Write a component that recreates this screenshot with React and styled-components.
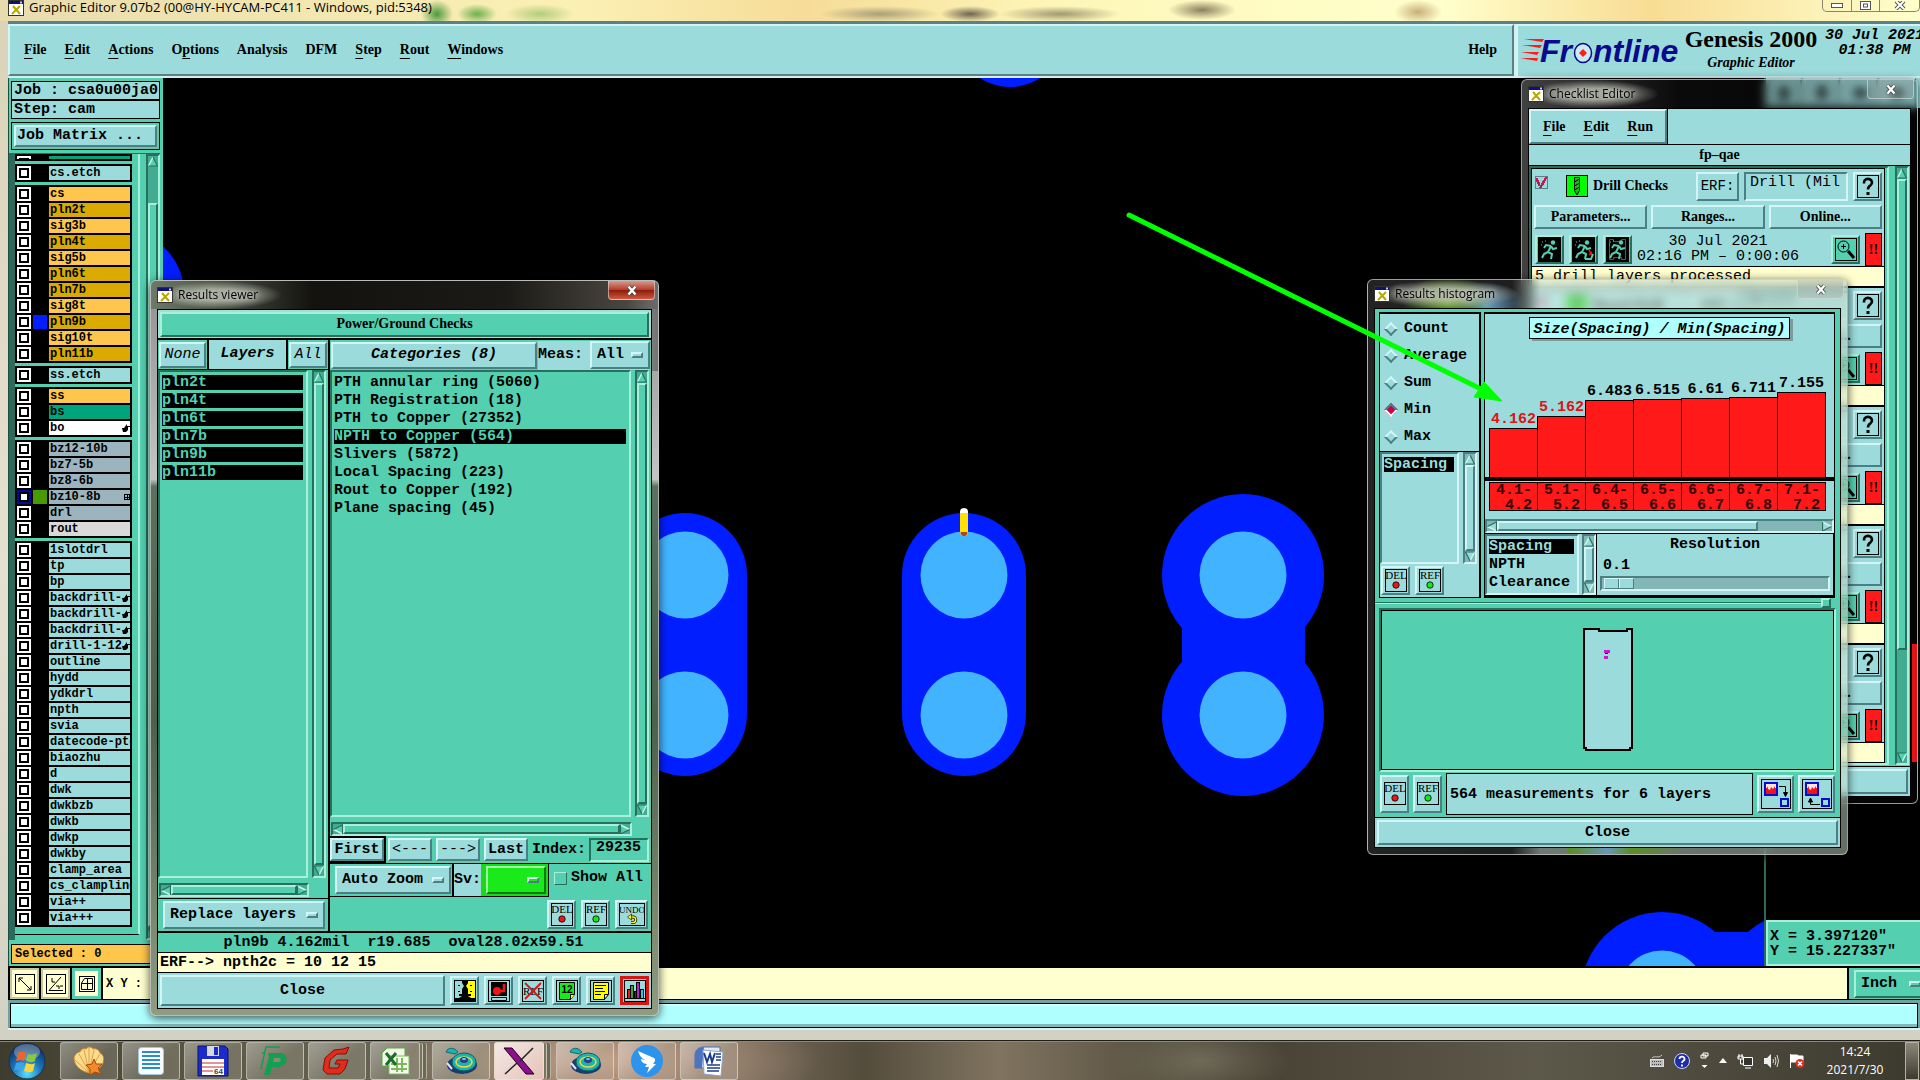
import React from 'react';
import styled, { createGlobalStyle, css } from 'styled-components';

const TEAL = '#9cdbdb';
const GREEN = '#54cfb0';
const CREAM = '#ffffcf';

const mono = '"Liberation Mono", monospace';
const serif = '"Liberation Serif", serif';
const sans = '"Open Sans", sans-serif';

const GlobalStyle = createGlobalStyle`
  *, *::before, *::after {
    box-sizing: border-box;
  }

  body {
    margin: 0;
    background: #000;
    overflow: hidden;
  }

  button, input, select {
    margin: 0;
    padding: 0;
    border: 0;
    border-radius: 0;
    font: inherit;
    color: inherit;
    background: none;
  }

  ul {
    margin: 0;
    padding: 0;
    list-style: none;
  }

  svg {
    display: block;
    flex: none;
  }
`;

const tealRaised = css`
  background: ${TEAL};
  border: 2px solid;
  border-color: #d3f5f5 #4c7f83 #4c7f83 #d3f5f5;
`;

const greenRaised = css`
  background: ${GREEN};
  border: 2px solid;
  border-color: #a9f0dc #26705c #26705c #a9f0dc;
`;

const greenSunken = css`
  background: ${GREEN};
  border: 2px solid;
  border-color: #26705c #a9f0dc #a9f0dc #26705c;
`;

const tealSunken = css`
  background: ${TEAL};
  border: 2px solid;
  border-color: #4c7f83 #d3f5f5 #d3f5f5 #4c7f83;
`;

/* ---------- shared controls ---------- */

const Screen = styled.div`
  position: relative;
  display: flex;
  flex-direction: column;
  height: 100vh;
  overflow: hidden;
  font-family: ${mono};
  font-size: 15px;
  font-weight: 700;
  line-height: 18px;
  color: #000;
  white-space: nowrap;
`;

const Button = styled.button`
  ${tealRaised}
  display: flex;
  align-items: center;
  justify-content: center;
  flex: ${(p) => (p.$grow ? 1 : 'none')};
  width: ${(p) => (p.$width ? `${p.$width}px` : 'auto')};
  height: ${(p) => (p.$height ? `${p.$height}px` : 'auto')};
  font-style: ${(p) => (p.$italic ? 'italic' : 'normal')};
  font-weight: ${(p) => (p.$light ? 400 : 700)};
  overflow: hidden;
`;

const SerifButton = styled(Button)`
  font-family: ${serif};
  font-size: 14px;
`;

const SelectBox = styled.label`
  ${(p) => (p.$tone === 'green' ? greenRaised : tealRaised)}
  display: flex;
  align-items: center;
  flex: none;
  width: ${(p) => p.$width}px;
  height: 28px;
  padding: 0 5px;
  ${(p) => p.$tone === 'lime' && 'background: #1aea1a; border-color: #a6f7a6 #0c7a0c #0c7a0c #a6f7a6;'}

  &::after {
    content: '';
    width: 12px;
    height: 6px;
    ${tealRaised}
    ${(p) => p.$tone === 'lime' && 'background: #1aea1a;'}
    ${(p) => p.$tone === 'green' && `background: ${GREEN};`}
  }

  select {
    appearance: none;
    flex: 1;
    min-width: 0;
    outline: none;
  }
`;

const Select = ({ label, options, width, tone }) => (
  <SelectBox $width={width} $tone={tone}>
    <select aria-label={label}>
      {options.map((o) => (
        <option key={o}>{o}</option>
      ))}
    </select>
  </SelectBox>
);

const BarTrack = styled.div`
  display: flex;
  flex-direction: ${(p) => (p.$across ? 'row' : 'column')};
  align-items: stretch;
  flex: none;
  ${(p) => (p.$across ? 'height: 14px;' : 'width: 14px;')}
  ${(p) => (p.$tone === 'teal' ? tealSunken : greenSunken)}
  background: ${(p) => (p.$tone === 'teal' ? '#83b7b7' : '#43ab91')};
  overflow: hidden;
`;

const BarRail = styled.div`
  flex: 1;
  min-height: 0;
  min-width: 0;
  display: flex;
  flex-direction: ${(p) => (p.$across ? 'row' : 'column')};
`;

const BarThumb = styled.div`
  ${(p) => (p.$tone === 'teal' ? tealRaised : greenRaised)}
  flex: ${(p) => p.$size} 0 0;
`;

const BarSpace = styled.div`
  flex: ${(p) => p.$size} 0 0;
`;

const turn = { up: 0, right: 90, down: 180, left: 270 };

const Arrow = ({ dir, tone }) => (
  <svg width="10" height="11" viewBox="0 0 10 11">
    <g transform={`rotate(${turn[dir]} 5 5.5)`}>
      <path d="M5 1 L9.5 10 H.5Z" fill={tone === 'teal' ? TEAL : GREEN} />
      <path d="M5 1 L.5 10" stroke="#c9f7ec" strokeWidth="1.4" fill="none" />
      <path d="M.5 10 H9.5 L5 1" stroke="#26705c" strokeWidth="1.2" fill="none" />
    </g>
  </svg>
);

const ScrollBar = ({ across, tone, before = 0, thumb = 1, after = 0 }) => (
  <BarTrack $across={across} $tone={tone}>
    <Arrow dir={across ? 'left' : 'up'} tone={tone} />
    <BarRail $across={across}>
      {before > 0 && <BarSpace $size={before} />}
      <BarThumb $size={thumb} $tone={tone} />
      {after > 0 && <BarSpace $size={after} />}
    </BarRail>
    <Arrow dir={across ? 'right' : 'down'} tone={tone} />
  </BarTrack>
);

const List = styled.ul`
  ${(p) => (p.$tone === 'teal' ? tealSunken : greenSunken)}
  flex: 1;
  min-width: 0;
  padding: 3px 3px 3px 2px;
  overflow: hidden;
`;

const ListItem = styled.li`
  height: 15px;
  line-height: 15px;
  margin-bottom: 3px;
  ${(p) => p.$on && `background: #000; color: ${p.$tone === 'teal' ? TEAL : GREEN};`}
`;

/* ---------- icons ---------- */

const WindowIcon = () => (
  <svg width="16" height="16" viewBox="0 0 16 16">
    <rect x=".5" y=".5" width="15" height="15" fill="#fff" stroke="#333" />
    <rect x="1" y="1" width="14" height="3" fill="#10107c" />
    <path d="M12 1.5h2v2h-2z" fill="#ccc" />
    <path d="M5 6 L12 14 M12 6 L4 14" stroke="#b8a800" strokeWidth="2" />
  </svg>
);

const TagIcon = ({ tag, dot }) => (
  <svg width={tag === 'UNDO' ? 26 : 22} height="23" viewBox={tag === 'UNDO' ? '0 0 26 23' : '0 0 22 23'}>
    <rect x=".5" y=".5" width={tag === 'UNDO' ? 25 : 21} height="22" fill={TEAL} stroke="#000" />
    <text
      x={tag === 'UNDO' ? 13 : 11}
      y="10"
      textAnchor="middle"
      fontFamily="Liberation Serif, serif"
      fontWeight="400"
      fontSize={tag === 'UNDO' ? 9 : 11}
    >
      {tag}
    </text>
    {dot && <circle cx="11" cy="16" r="3.2" fill={dot} stroke="#000" strokeWidth=".8" />}
    {tag === 'UNDO' && (
      <g fill="none">
        <path d="M11 14h3a2.500 2.500 0 0 1 0 5.500h-2" stroke="#000" strokeWidth="3" />
        <path d="M11 14h3a2.500 2.500 0 0 1 0 5.500h-2" stroke="#ff0" strokeWidth="1.500" />
        <path d="M8.500 14l4-3v6z" fill="#ff0" stroke="#000" strokeWidth=".6" />
      </g>
    )}
  </svg>
);

const DelButton = ({ height = 29 }) => (
  <Button $width={29} $height={height} aria-label="Delete">
    <TagIcon tag="DEL" dot="#f01414" />
  </Button>
);

const RefButton = ({ height = 29 }) => (
  <Button $width={29} $height={height} aria-label="Reference">
    <TagIcon tag="REF" dot="#1ae61a" />
  </Button>
);

const FacesIcon = () => (
  <svg width="22" height="22" viewBox="0 0 22 22">
    <path d="M0 0h11v22H0z" fill={TEAL} />
    <path d="M11 0h11v22h-11z" fill="#ff0" />
    <path d="M8 0h6v3l-2 3 2 3v5h3v2h-3l3 2h5v4H0v-4h5l3-2H5v-2h3V9l2-3-2-3z" fill="#000" />
    <path d="M4 5.500h2M16 5.500h2M4 11.500h2M16 11.500h2" stroke="#000" />
    <rect x=".5" y=".5" width="21" height="21" fill="none" stroke="#000" />
  </svg>
);

const ShotIcon = () => (
  <svg width="22" height="22" viewBox="0 0 22 22">
    <rect x=".5" y=".5" width="21" height="21" fill={TEAL} stroke="#000" />
    <rect x="3" y="2" width="16" height="14" />
    <circle cx="9" cy="11" r="4" fill="#f01414" />
    <path d="M9 11h7V4" stroke="#f01414" strokeWidth="2.5" fill="none" />
    <path d="M3.5 17.5h15v3h-15z" fill={TEAL} stroke="#000" />
  </svg>
);

const NoRefIcon = () => (
  <svg width="22" height="22" viewBox="0 0 22 22">
    <rect x=".5" y=".5" width="21" height="21" fill={TEAL} stroke="#000" />
    <text x="11" y="15" textAnchor="middle" fontFamily="Liberation Serif, serif" fontWeight="400" fontSize="11">
      REF
    </text>
    <path d="M3 3l16 16M19 3L3 19" stroke="#d01818" strokeWidth="1.8" />
  </svg>
);

const HalfIcon = () => (
  <svg width="22" height="22" viewBox="0 0 22 22">
    <rect x=".5" y=".5" width="21" height="21" fill={TEAL} stroke="#000" />
    <path d="M3.500 2.500h15v12l-4 5h-11z" fill="#1aea1a" stroke="#000" />
    <path d="M14.500 19.500v-5h4" fill="#ff0" stroke="#000" />
    <text x="11" y="13" textAnchor="middle" fontFamily="Liberation Sans, sans-serif" fontWeight="700" fontSize="10">
      12
    </text>
  </svg>
);

const NoteIcon = () => (
  <svg width="22" height="22" viewBox="0 0 22 22">
    <rect x=".5" y=".5" width="21" height="21" fill={TEAL} stroke="#000" />
    <path d="M3.500 2.500h15v12l-4 5h-11z" fill="#ff0" stroke="#000" />
    <path d="M5 5.500h11M5 8.500h8M5 11.500h10M5 14.500h6M14.500 19.500v-5h4" stroke="#000" fill="none" />
  </svg>
);

const ChartIcon = () => (
  <svg width="22" height="22" viewBox="0 0 22 22" shapeRendering="crispEdges">
    <rect x=".5" y=".5" width="21" height="21" fill={TEAL} stroke="#000" />
    <g stroke="#000">
      <path d="M3.500 9.500h3v9h-3z" fill="#f01414" />
      <path d="M6.500 5.500h3v13h-3z" fill="#3aa03a" />
      <path d="M10.500 11.500h2v7h-2z" fill="#1a1ae0" />
      <path d="M12.500 2.500h3v16h-3z" fill="#c81ac8" />
      <path d="M16.500 9.500h3v9h-3z" fill="#1ad0e6" />
      <path d="M1 18.500h20" />
    </g>
  </svg>
);

const ToFromIcon = ({ back }) => (
  <svg width="30" height="30" viewBox="0 0 30 30">
    <rect x=".5" y=".5" width="29" height="29" fill={TEAL} stroke="#000" />
    <rect x="4" y="4" width="12" height="12" fill="#f01414" stroke="#0a0ad0" strokeWidth="2" />
    <path d="M5 5h10v4h-1V7l-2 3-2-2-1 3-2-1V7l-1 2H5z" fill="#ffe3e3" />
    <rect x="20" y="20" width="7" height="7" fill={TEAL} stroke="#0a0ad0" strokeWidth="2" />
    {back ? (
      <g stroke="#000">
        <path d="M18 25.500H8.500V21" fill="none" />
        <path d="M6.500 23h4l-2-4z" fill="#000" />
      </g>
    ) : (
      <g stroke="#000">
        <path d="M18 7.500h6.500V14" fill="none" />
        <path d="M22.500 13.500h4l-2 4z" fill="#000" />
      </g>
    )}
  </svg>
);

const DrillIcon = () => (
  <svg width="22" height="22" viewBox="0 0 22 22">
    <rect x=".5" y=".5" width="21" height="21" fill="#0f0" stroke="#000" />
    <path d="M8.500 2.500h5v13l-2.500 4.500-2.500-4.500z" fill="#0c0" stroke="#000" />
    <path d="M8.500 7l5-3M8.500 11l5-3M8.500 15l5-3" stroke="#000" />
  </svg>
);

const RunIcon = ({ mark }) => (
  <svg width="23" height="25" viewBox="0 0 23 25">
    <rect width="23" height="25" />
    {mark === 'frame' && <path d="M3.500 2.500h4v2h8v-2h4v20h-4v-2h-8v2h-4z" fill="none" stroke="#f01414" />}
    <circle cx="15" cy="5.500" r="2.200" fill={GREEN} />
    <path d="M13 9l-3 6 4 2-1 5M10 15l-4 2-2 4M13 9l-5-1-2 3M13 9l2 3 4-1" stroke={GREEN} strokeWidth="2" fill="none" />
    <path d="M4 5h1M7 4h1M3 8h1" stroke={GREEN} />
    {mark === 'slash' && <path d="M17 13l3 5M20 15l-3 3" stroke="#f01414" strokeWidth="1.500" />}
    {mark === 'slash' && <path d="M13 22h6l2-5" stroke={GREEN} strokeWidth="2" fill="none" />}
  </svg>
);

const LensIcon = () => (
  <svg width="22" height="23" viewBox="0 0 22 23">
    <rect x=".5" y=".5" width="21" height="22" fill={GREEN} stroke="#000" />
    <circle cx="8.500" cy="8.500" r="5.500" fill={GREEN} stroke="#000" />
    <path d="M6 8.500h5M8.500 6v5" stroke="#000" />
    <path d="M13 13l6 7" stroke="#000" strokeWidth="3" />
  </svg>
);

const HelpIcon = () => (
  <svg width="22" height="23" viewBox="0 0 22 23">
    <rect x=".5" y=".5" width="21" height="22" fill={TEAL} stroke="#000" />
    <path d="M7 8.500V7.500a4 3.600 0 1 1 6.500 2.800c-2 1.200-2.500 1.700-2.500 4.200" stroke="#000" strokeWidth="2.600" fill="none" />
    <rect x="9.500" y="17" width="3" height="3" />
  </svg>
);

const HandIcon = () => (
  <svg width="8" height="8" viewBox="0 0 8 8">
    <path d="M0 4h2l3-4v2h3v1H6v3L4 8H1z" />
  </svg>
);

const TableIcon = () => (
  <svg width="6" height="6" viewBox="0 0 6 6" shapeRendering="crispEdges">
    <path d="M.5.5h5v5h-5zM3 .5v5M.5 3h5" fill="none" stroke="#000" />
  </svg>
);

const LogoSvg = styled.svg`
  overflow: visible;
`;

const FrontlineLogo = () => (
  <LogoSvg width="162" height="34" viewBox="0 0 162 34">
    <g fill="#ff1c1c">
      <path d="M4 4h20l-2 3zM2 10h20l-2 3zM1 17h18l-2 3zM0 23h18l-1 3z" />
    </g>
    <g fill="#0a0a8c" fontFamily="Liberation Sans, sans-serif" fontSize="32" fontWeight="700" fontStyle="italic">
      <text x="20" y="27">Fr</text>
      <text x="73" y="27">ntline</text>
    </g>
    <ellipse cx="63" cy="18" rx="8.500" ry="9.500" fill="#c8ecf2" stroke="#0a0a8c" strokeWidth="1.500" />
    <path d="M63 14l4 4-4 4-4-4z" fill="#ff1c1c" />
  </LogoSvg>
);

/* ---------- main editor window ---------- */

const Editor = styled.main`
  flex: 1;
  min-height: 0;
  display: flex;
  flex-direction: column;
  padding: 0 0 10px 8px;
  background: linear-gradient(#d9d3b8, #e6e0d0 55%, #d2d2c4);
`;

const EditorTitle = styled.header`
  display: flex;
  align-items: flex-start;
  justify-content: space-between;
  flex: none;
  height: 21px;
  margin-left: -8px;
  padding-left: 8px;
  background:
    radial-gradient(ellipse 16px 14px at 437px 14px, #4c9a3c, transparent),
    radial-gradient(ellipse 20px 10px at 477px 14px, #6cb04c, transparent),
    radial-gradient(ellipse 34px 10px at 540px 14px, #b4cc7c, transparent),
    radial-gradient(ellipse 60px 8px at 880px 14px, #a8a078, transparent),
    radial-gradient(ellipse 30px 8px at 970px 14px, #6c6450, transparent),
    radial-gradient(ellipse 60px 8px at 1060px 14px, #a09870, transparent),
    radial-gradient(ellipse 34px 10px at 1202px 10px, #8c8060, transparent),
    radial-gradient(ellipse 24px 12px at 1418px 12px, #c8b078, transparent),
    linear-gradient(90deg, #e8dcae, #fbf0b4 30%, #f6dc98 42%, #fdf6b8 55%, #ffffcc 75%, #f8dc94 86%, #ffffcc);
`;

const EditorName = styled.h1`
  display: flex;
  gap: 5px;
  margin: 0;
  font: 400 13px/14px ${sans};
`;

const WindowTools = styled.div`
  display: flex;
  height: 12px;
  border: 1px solid #8a8470;
  border-top: 0;
  border-radius: 0 0 5px 5px;
  overflow: hidden;
`;

const WindowTool = styled.button`
  display: flex;
  align-items: center;
  justify-content: center;
  width: ${(p) => p.$width}px;
  border-left: ${(p) => (p.$first ? 0 : '1px solid #8a8470')};
`;

const TopBar = styled.div`
  display: flex;
  flex: none;
  height: 57px;
  gap: 2px;
  background: #d3f0f0;
  border-top: 3px solid #5c8084;
`;

const MenuBar = styled.nav`
  flex: 1;
  min-width: 0;
  display: flex;
  align-items: center;
  margin-bottom: 2px;
  padding: 0 15px 0 14px;
  gap: 18px;
  background: ${TEAL};
  border: 2px solid;
  border-color: #d3f5f5 #5c8084 #5c8084 #d3f5f5;
  font-family: ${serif};
  font-size: 14px;

  & > :last-child {
    margin-left: auto;
  }
`;

const MenuItem = styled.button`
  line-height: 18px;

  u {
    text-underline-offset: 4px;
    text-decoration-thickness: 1px;
  }
`;

const Menu = ({ text, at }) => (
  <MenuItem>
    {at === undefined ? (
      text
    ) : (
      <>
        {text.slice(0, at)}
        <u>{text[at]}</u>
        {text.slice(at + 1)}
      </>
    )}
  </MenuItem>
);

const Brand = styled.div`
  display: flex;
  flex: none;
  width: 404px;
  background: ${TEAL};
  border: 2px solid #d3f5f5;
  border-right: 0;
  overflow: hidden;
`;

const LogoSlot = styled.div`
  padding: 9px 0 0 2px;
`;

const Product = styled.div`
  flex: none;
  width: 138px;
  text-align: center;
  font-family: ${serif};
  font-size: 24px;
  line-height: 26px;

  em {
    display: block;
    font-size: 14px;
    line-height: 22px;
  }
`;

const Clock = styled.div`
  flex: none;
  padding: 2px 0 0 5px;
  line-height: 15px;
  font-style: italic;
  text-align: center;
`;

const Body = styled.div`
  flex: 1;
  min-height: 0;
  display: flex;
`;

const Side = styled.aside`
  display: flex;
  flex-direction: column;
  flex: none;
  width: 155px;
  padding: 3px 3px 2px 2px;
  background: ${GREEN};
  border-left: 1px solid #1d4c40;
`;

const JobLine = styled.div`
  height: 19px;
  line-height: 18px;
  padding-left: 2px;
  background: ${TEAL};
  border: 1px solid #000;
`;

const MatrixBox = styled.div`
  margin: 3px 0 3px;
  padding: 2px;
  border: 1px solid #000;

  button {
    width: 100%;
    height: 22px;
    justify-content: flex-start;
    padding-left: 1px;
  }
`;

const LayerArea = styled.div`
  flex: 1;
  min-height: 0;
  display: flex;
  margin: 0 0 4px -2px;
  border-top: 1px solid #26705c;
  border-left: 6px solid #2c6a5c;
`;

const LayerList = styled.div`
  flex: 1;
  min-width: 0;
  display: flex;
  flex-direction: column;
  gap: 3px;
  margin: 0 6px 5px 0;
  padding: 0 6px 0 0;
  border-right: 2px solid #a9f0dc;
  border-bottom: 1px solid #000;
  overflow: hidden;
`;

const LayerGroup = styled.div`
  display: grid;
  gap: 2px;
  padding: 2px;
  background: #000;
`;

const LayerRow = styled.label`
  display: grid;
  grid-template-columns: 14px 14px minmax(0, 1fr);
  gap: 2px;
  height: ${(p) => (p.$cut ? 3 : 14)}px;
  align-items: end;
  overflow: hidden;

  input {
    appearance: none;
    width: 14px;
    height: 14px;
    border: 2px solid ${(p) => (p.$active ? '#000a9c' : '#fff')};
    background: #fff;
    box-shadow: inset 0 0 0 2px #000;
  }
`;

const Swatch = styled.span`
  height: 14px;
  background: ${(p) => p.$color || '#000'};
`;

const LayerName = styled.span`
  display: flex;
  align-items: center;
  height: 14px;
  font-size: 12px;
  line-height: 14px;
  padding-left: 1px;
  background: ${(p) => p.$color};

  span {
    flex: 1;
    min-width: 0;
    overflow: hidden;
  }
`;

const Selected = styled.div`
  height: 20px;
  padding-left: 3px;
  font-size: 12px;
  line-height: 18px;
  background: #ffc64d;
  border: 1px solid #000;
`;

const Canvas = styled.div`
  flex: 1;
  min-width: 0;
  background: #000;

  svg {
    width: 100%;
    height: 100%;
  }
`;

const Overview = styled.div`
  display: flex;
  flex-direction: column;
  justify-content: space-between;
  flex: none;
  width: 156px;
  background: #000;
  border-left: 2px solid #2c6a5c;
`;

const OverviewTools = styled.div`
  display: flex;
  gap: 2px;
  height: 30px;
  background: ${TEAL};
`;

const Coords = styled.div`
  height: 46px;
  padding: 7px 2px;
  line-height: 15px;
  font-size: 15px;
  white-space: pre;
  ${greenRaised}
  border-right: 0;
  border-bottom-color: #a9f0dc;
`;

const CommandRow = styled.div`
  display: flex;
  flex: none;
  height: 34px;
  background: #000;
  padding: 2px 0 1px 2px;
  gap: 2px;
`;

const ModeButton = styled.button`
  display: flex;
  align-items: center;
  justify-content: center;
  width: 29px;
  background: ${CREAM};
  border: ${(p) => (p.$on ? `3px solid ${GREEN}` : '2px solid #c8c8a0')};
`;

const CommandField = styled.label`
  flex: 1;
  display: flex;
  align-items: center;
  padding-left: 3px;
  font-size: 12px;
  background: ${CREAM};

  input {
    flex: 1;
    outline: none;
  }
`;

const UnitBox = styled.div`
  width: 71px;
  padding: 2px 0 1px 5px;
  background: ${GREEN};
  overflow: hidden;
`;

const MessageBar = styled.div`
  flex: none;
  height: 30px;
  padding: 3px 2px 1px;
  background: #6fa3a3;
  border-bottom: 2px solid #d3f5f5;

  div {
    height: 25px;
    background: #b0ffff;
    border: 1px solid #000;
    box-shadow: inset 0 -3px 0 #7fb9b9, inset 0 2px 0 #d8ffff;
  }
`;

const layerGroups = [
  [{ name: 'cc', color: '#00a47c', cut: true }],
  [{ name: 'cs.etch', color: TEAL }],
  [
    { name: 'cs', color: '#ffc64d' },
    { name: 'pln2t', color: '#daaa00' },
    { name: 'sig3b', color: '#ffc64d' },
    { name: 'pln4t', color: '#daaa00' },
    { name: 'sig5b', color: '#ffc64d' },
    { name: 'pln6t', color: '#daaa00' },
    { name: 'pln7b', color: '#daaa00' },
    { name: 'sig8t', color: '#ffc64d' },
    { name: 'pln9b', color: '#daaa00', swatch: '#001eff' },
    { name: 'sig10t', color: '#ffc64d' },
    { name: 'pln11b', color: '#daaa00' },
  ],
  [{ name: 'ss.etch', color: TEAL }],
  [
    { name: 'ss', color: '#ffc64d' },
    { name: 'bs', color: '#00a47c' },
    { name: 'bo', color: '#fff', hand: true },
  ],
  [
    { name: 'bz12-10b', color: '#9cb4bd' },
    { name: 'bz7-5b', color: '#9cb4bd' },
    { name: 'bz8-6b', color: '#9cb4bd' },
    { name: 'bz10-8b', color: '#9cb4bd', swatch: '#479a00', active: true, table: true },
    { name: 'drl', color: '#9cb4bd' },
    { name: 'rout', color: '#d9d9d9' },
  ],
  [
    { name: '1slotdrl', color: TEAL },
    { name: 'tp', color: TEAL },
    { name: 'bp', color: TEAL },
    { name: 'backdrill-', color: TEAL, hand: true },
    { name: 'backdrill-', color: TEAL, hand: true },
    { name: 'backdrill-', color: TEAL, hand: true },
    { name: 'drill-1-12', color: TEAL, hand: true },
    { name: 'outline', color: TEAL },
    { name: 'hydd', color: TEAL },
    { name: 'ydkdrl', color: TEAL },
    { name: 'npth', color: TEAL },
    { name: 'svia', color: TEAL },
    { name: 'datecode-pto', color: TEAL },
    { name: 'biaozhu', color: TEAL },
    { name: 'd', color: TEAL },
    { name: 'dwk', color: TEAL },
    { name: 'dwkbzb', color: TEAL },
    { name: 'dwkb', color: TEAL },
    { name: 'dwkp', color: TEAL },
    { name: 'dwkby', color: TEAL },
    { name: 'clamp_area', color: TEAL },
    { name: 'cs_clampline', color: TEAL },
    { name: 'via++', color: TEAL },
    { name: 'via+++', color: TEAL },
  ],
];

const Sidebar = () => (
  <Side>
    <JobLine>Job : csa0u00ja0</JobLine>
    <JobLine>Step: cam</JobLine>
    <MatrixBox>
      <Button>Job Matrix ...</Button>
    </MatrixBox>
    <LayerArea>
      <LayerList>
        {layerGroups.map((group, g) => (
          <LayerGroup key={g}>
            {group.map((l, i) => (
              <LayerRow key={i} $active={l.active} $cut={l.cut}>
                <input type="checkbox" />
                <Swatch $color={l.swatch} />
                <LayerName $color={l.color}>
                  <span>{l.name}</span>
                  {l.hand && <HandIcon />}
                  {l.table && <TableIcon />}
                </LayerName>
              </LayerRow>
            ))}
          </LayerGroup>
        ))}
      </LayerList>
      <ScrollBar before={5} thumb={100} />
    </LayerArea>
    <Selected>Selected : 0</Selected>
  </Side>
);

const COPPER = '#001eff';
const HOLE = '#42b4ff';

// board artwork, drawn in canvas pixels
const Board = () => (
  <Canvas>
    <svg>
      <g fill={COPPER}>
        <circle cx="847" cy="-46" r="55" />
        <circle cx="-41" cy="215" r="62" />
        <rect x="460" y="435" width="124" height="263" rx="62" />
        <rect x="739" y="435" width="124" height="263" rx="62" />
        <circle cx="1080" cy="497" r="81" />
        <circle cx="1080" cy="637" r="81" />
        <rect x="1019" y="540" width="123" height="60" />
        <circle cx="1499" cy="915" r="81" />
        <circle cx="1638" cy="915" r="81" />
        <rect x="1499" y="854" width="140" height="60" />
      </g>
      <g fill={HOLE}>
        <circle cx="522" cy="497" r="43.500" />
        <circle cx="522" cy="637" r="43.500" />
        <circle cx="801" cy="497" r="43.500" />
        <circle cx="801" cy="637" r="43.500" />
        <circle cx="1080" cy="497" r="43.500" />
        <circle cx="1080" cy="637" r="43.500" />
        <circle cx="1499" cy="916" r="43.500" />
      </g>
      <rect x="797" y="430" width="8" height="28" rx="4" fill="#fff" />
      <rect x="797" y="435" width="8" height="19" fill="#ffe000" />
      <path d="M797.500 454h7v2l-2 2h-3l-2-2z" fill="#b44a00" />
    </svg>
  </Canvas>
);

const MainWindow = () => (
  <Editor>
    <EditorTitle>
      <EditorName>
        <WindowIcon />
        Graphic Editor 9.07b2 (00@HY-HYCAM-PC411 - Windows, pid:5348)
      </EditorName>
      <WindowTools>
        <WindowTool $width={28} $first aria-label="Minimize">
          <svg width="12" height="5" viewBox="0 0 12 5">
            <rect x=".5" y=".5" width="11" height="4" fill="#fff" stroke="#555" />
          </svg>
        </WindowTool>
        <WindowTool $width={28} aria-label="Restore">
          <svg width="11" height="9" viewBox="0 0 11 9">
            <rect x=".5" y=".5" width="10" height="8" fill="#fff" stroke="#555" />
            <rect x="3.500" y="3" width="4" height="3" fill="#fff" stroke="#555" />
          </svg>
        </WindowTool>
        <WindowTool $width={40} aria-label="Close window">
          <svg width="12" height="9" viewBox="0 0 12 9">
            <path d="M2 0l8 8M10 0L2 8" stroke="#555" strokeWidth="4" />
            <path d="M2 0l8 8M10 0L2 8" stroke="#fff" strokeWidth="2" />
          </svg>
        </WindowTool>
      </WindowTools>
    </EditorTitle>
    <TopBar>
      <MenuBar>
        <Menu text="File" at={0} />
        <Menu text="Edit" at={0} />
        <Menu text="Actions" at={0} />
        <Menu text="Options" at={1} />
        <Menu text="Analysis" />
        <Menu text="DFM" />
        <Menu text="Step" at={0} />
        <Menu text="Rout" at={0} />
        <Menu text="Windows" at={0} />
        <Menu text="Help" />
      </MenuBar>
      <Brand>
        <LogoSlot>
          <FrontlineLogo />
        </LogoSlot>
        <Product>
          Genesis 2000
          <em>Graphic Editor</em>
        </Product>
        <Clock>
          30 Jul 2021
          <br />
          01:38 PM
        </Clock>
      </Brand>
    </TopBar>
    <Body>
      <Sidebar />
      <Board />
      <Overview>
        <OverviewTools>
          {['up', 'down', 'left', 'right'].map((d) => (
            <Button key={d} $width={36} $height={30} aria-label={`Pan ${d}`}>
              <svg width="16" height="16" viewBox="0 0 16 16">
                <path d="M8 1l6 7h-3v7H5V8H2z" transform={`rotate(${turn[d]} 8 8)`} />
              </svg>
            </Button>
          ))}
        </OverviewTools>
        <Coords>{'X = 3.397120"\nY = 15.227337"'}</Coords>
      </Overview>
    </Body>
    <CommandRow>
      <ModeButton aria-label="Diagonal">
        <svg width="20" height="20" viewBox="0 0 20 20">
          <rect x=".5" y=".5" width="19" height="19" fill="none" stroke="#000" />
          <path d="M4 4l12 12M4 8V4h4M12 16h4v-4" stroke="#000" fill="none" />
        </svg>
      </ModeButton>
      <ModeButton aria-label="Angle">
        <svg width="20" height="20" viewBox="0 0 20 20">
          <rect x=".5" y=".5" width="19" height="19" fill="none" stroke="#000" />
          <path d="M15 3L3 16.500h14M6 4v4h3M10 12h3v3M14 12h3" stroke="#000" fill="none" />
        </svg>
      </ModeButton>
      <ModeButton $on aria-label="Grid">
        <svg width="20" height="20" viewBox="0 0 20 20">
          <rect x="2.500" y="2.500" width="15" height="15" fill="none" stroke="#000" />
          <path d="M4.500 9l3-4.500h8v11h-11zM4.500 9.500h11M10.500 4.500v11" stroke="#000" fill="none" />
        </svg>
      </ModeButton>
      <CommandField>
        X Y :
        <input type="text" />
      </CommandField>
      <UnitBox>
        <Select label="Units" options={['Inch', 'MM']} width={74} tone="green" />
      </UnitBox>
    </CommandRow>
    <MessageBar>
      <div />
    </MessageBar>
  </Editor>
);

/* ---------- floating windows ---------- */

const Frame = styled.section`
  position: absolute;
  display: flex;
  flex-direction: column;
  padding: 0 6px;
  border: 1px solid rgba(200, 200, 200, 0.75);
  border-radius: 6px;
  box-shadow: 0 2px 10px rgba(0, 0, 0, 0.7);
  backdrop-filter: blur(5px);
  padding-bottom: 6px;
`;

const ViewerFrame = styled(Frame)`
  left: 150px;
  top: 280px;
  width: 509px;
  background:
    linear-gradient(90deg, transparent 94%, rgba(110, 110, 110, 0.9)) top / 100% 90px no-repeat,
    linear-gradient(90deg, #6c7a68, #14120e 32%, #1c1a16 70%, #55524c) top / 100% 28px no-repeat,
    linear-gradient(#8f8f8f, #c4c4c4 27%, #5c7060 28%, #4c604c 60%, #8f9c80);
`;

const ChecklistFrame = styled(Frame)`
  right: 2px;
  top: 79px;
  width: 397px;
  background:
    linear-gradient(#e01414, #e01414) right 564px / 5px 118px no-repeat,
    linear-gradient(90deg, rgba(130, 130, 130, 0.5), rgba(20, 20, 20, 0.5) 40%, rgba(20, 20, 20, 0.2));
`;

const HistogramFrame = styled(Frame)`
  right: 72px;
  top: 279px;
  width: 481px;
  background:
    radial-gradient(ellipse 46px 26px at 80px 22px, #6ea82c, transparent),
    radial-gradient(ellipse 40px 24px at 118px 26px, #68a4cc, transparent),
    linear-gradient(90deg, transparent 41%, #5c8c24 42%, #6c94b8 50%, #5c8c24 55%, transparent 66%) bottom / 100% 6px no-repeat,
    linear-gradient(90deg, rgba(50, 50, 50, 0.7), rgba(50, 50, 50, 0.6) 30%, rgba(220, 240, 230, 0.5) 36%, rgba(200, 220, 200, 0.5));
`;

const FrameTitle = styled.header`
  display: flex;
  justify-content: space-between;
  flex: none;
  height: 28px;
  margin-right: -3px;

  h2 {
    display: flex;
    align-items: center;
    gap: 5px;
    margin: 0;
    padding-right: 24px;
    font: 400 12px/26px ${sans};
    color: #000;
    background: radial-gradient(ellipse closest-side, rgba(190, 195, 180, 0.75) 40%, transparent);
    text-shadow: 0 0 5px #ccc, 0 0 8px #ccc;
  }
`;

const FrameClose = styled.button`
  display: flex;
  align-items: center;
  justify-content: center;
  width: 47px;
  height: 19px;
  border: 1px solid rgba(220, 220, 220, 0.6);
  border-top: 0;
  border-radius: 0 0 4px 4px;
  background: ${(p) => (p.$red ? 'linear-gradient(#d89a90, #b83a24 50%, #8c1c0c 52%, #d0583c)' : 'rgba(160, 160, 160, 0.25)')};
`;

const FrameHead = ({ title, red }) => (
  <FrameTitle>
    <h2>
      <WindowIcon />
      {title}
    </h2>
    <FrameClose $red={red} aria-label={`Close ${title}`}>
      <svg width="12" height="11" viewBox="0 0 12 11">
        <path d="M2.500 1.500l7 8M9.500 1.500l-7 8" stroke="#444" strokeWidth="4" />
        <path d="M2.500 1.500l7 8M9.500 1.500l-7 8" stroke="#fff" strokeWidth="2.400" />
      </svg>
    </FrameClose>
  </FrameTitle>
);

/* ---------- results viewer ---------- */

const Panel = styled.div`
  display: flex;
  flex-direction: column;
  background: ${(p) => (p.$tone === 'teal' ? TEAL : GREEN)};
  border: 1px solid #000;
`;

const CheckName = styled.div`
  height: 30px;
  padding: 2px;
  background: #9fe0d8;
  border-bottom: 2px solid #000;

  div {
    ${greenRaised}
    height: 25px;
    line-height: 20px;
    text-align: center;
    font-family: ${serif};
    font-size: 14px;
  }
`;

const ViewerBody = styled.div`
  display: flex;
  height: 591px;
`;

const LayersColumn = styled.div`
  display: flex;
  flex-direction: column;
  flex: none;
  width: 172px;
  border-right: 2px solid #000;
`;

const CategoriesColumn = styled.div`
  display: flex;
  flex-direction: column;
  flex: 1;
  min-width: 0;
`;

const HeadRow = styled.div`
  display: flex;
  align-items: center;
  flex: none;
  height: 30px;
  gap: 1px;
  padding: 0 1px;
  border-bottom: ${(p) => (p.$line ? '1px solid #000' : 0)};
`;

const LayersTitle = styled.div`
  flex: 1;
  height: 29px;
  line-height: 27px;
  text-align: center;
  font-style: italic;
  background: ${TEAL};
  border: solid #000;
  border-width: 0 2px;
`;

const MeasBox = styled.div`
  display: flex;
  align-items: center;
  flex: 1;
  height: 29px;
  justify-content: space-between;
  background: ${TEAL};
`;

const Scrolled = styled.div`
  display: flex;
  flex: 1;
  min-height: 0;
  gap: 4px;
  padding-right: 2px;
`;

const AcrossSlot = styled.div`
  flex: none;
  padding: 5px 19px 0 1px;
`;

const ReplaceRow = styled.div`
  display: flex;
  align-items: center;
  flex: none;
  height: 33px;
  margin-top: 1px;
  padding-left: 5px;
  border-top: 1px solid #000;
`;

const StepRow = styled.div`
  display: flex;
  align-items: center;
  flex: none;
  height: 27px;
  gap: 4px;
  padding-right: 2px;

  label {
    flex: 1;
    display: flex;
    align-items: center;
    justify-content: space-between;
  }

  & > :first-child {
    outline: 2px solid #000;
  }
`;

const IndexInput = styled.input`
  ${greenSunken}
  width: 60px;
  height: 24px;
  padding: 0 0 4px 5px;
`;

const ZoomRow = styled.div`
  display: flex;
  flex: none;
  height: 34px;
  border-top: 1px solid #000;
`;

const ZoomBox = styled.div`
  display: flex;
  align-items: center;
  height: 33px;
  padding: 0 1px 0 5px;
  border: solid #000;
  border-width: 0 2px 1px 0;
`;

const SvBox = styled.div`
  display: flex;
  align-items: center;
  width: 95px;
  height: 33px;
  justify-content: space-between;
  padding-right: 2px;
  background: linear-gradient(90deg, ${TEAL} 27px, #1ad81a 27px);
  border: solid #000;
  border-width: 0 1px 1px 0;
`;

const ShowAll = styled.label`
  display: flex;
  align-items: center;
  gap: 4px;
  height: 28px;
  padding-left: 5px;

  input {
    appearance: none;
    width: 13px;
    height: 13px;
    ${greenRaised}
    border-width: 1px;
  }
`;

const ActionRow = styled.div`
  display: flex;
  align-items: center;
  justify-content: flex-end;
  flex: none;
  height: 34px;
  gap: 5px;
  padding-right: 3px;
`;

const Status = styled.div`
  height: 22px;
  line-height: 20px;
  text-align: center;
  padding-right: 2px;
  white-space: pre;
  border: solid #000;
  border-width: 2px 0 1px;
`;

const ErfLine = styled.div`
  height: 20px;
  line-height: 20px;
  padding-left: 2px;
  background: ${CREAM};
  border: solid #000;
  border-width: 0 0 1px;
`;

const BottomRow = styled.div`
  display: flex;
  align-items: center;
  height: 35px;
  gap: 5px;
  padding: 0 2px;
  background: ${TEAL};
`;

const ChartButton = styled(Button)`
  border: 3px solid #d81414;
`;

const viewerLayers = ['pln2t', 'pln4t', 'pln6t', 'pln7b', 'pln9b', 'pln11b'];

const categories = [
  'PTH annular ring (5060)',
  'PTH Registration (18)',
  'PTH to Copper (27352)',
  'NPTH to Copper (564)',
  'Slivers (5872)',
  'Local Spacing (223)',
  'Rout to Copper (192)',
  'Plane spacing (45)',
];

const ResultsViewer = () => (
  <ViewerFrame>
    <FrameHead title="Results viewer" red />
    <Panel>
      <CheckName>
        <div>Power/Ground Checks</div>
      </CheckName>
      <ViewerBody>
        <LayersColumn>
          <HeadRow $line>
            <Button $width={47} $height={26} $italic $light>
              None
            </Button>
            <LayersTitle>Layers</LayersTitle>
            <Button $width={38} $height={26} $italic $light>
              All
            </Button>
          </HeadRow>
          <Scrolled>
            <List>
              {viewerLayers.map((l) => (
                <ListItem key={l} $on>
                  {l}
                </ListItem>
              ))}
            </List>
            <ScrollBar />
          </Scrolled>
          <AcrossSlot>
            <ScrollBar across />
          </AcrossSlot>
          <ReplaceRow>
            <Select label="Layer mode" options={['Replace layers', 'Add layers']} width={162} />
          </ReplaceRow>
        </LayersColumn>
        <CategoriesColumn>
          <HeadRow>
            <Button $width={206} $height={27} $italic>
              Categories (8)
            </Button>
            <MeasBox>
              Meas:
              <Select label="Meas:" options={['All', 'Worst']} width={60} />
            </MeasBox>
          </HeadRow>
          <Scrolled>
            <List>
              {categories.map((c, i) => (
                <ListItem key={c} $on={i === 3}>
                  {c}
                </ListItem>
              ))}
            </List>
            <ScrollBar />
          </Scrolled>
          <AcrossSlot>
            <ScrollBar across />
          </AcrossSlot>
          <StepRow>
            <Button $width={54} $height={23}>
              First
            </Button>
            <Button $width={44} $height={23} $light>
              {'<---'}
            </Button>
            <Button $width={44} $height={23} $light>
              {'--->'}
            </Button>
            <Button $width={44} $height={23}>
              Last
            </Button>
            <label>
              Index:
              <IndexInput type="text" defaultValue="29235" />
            </label>
          </StepRow>
          <ZoomRow>
            <ZoomBox>
              <Select label="Zoom mode" options={['Auto Zoom', 'Manual']} width={116} />
            </ZoomBox>
            <SvBox>
              Sv:
              <Select label="Severity" options={['', 'Red']} width={60} tone="lime" />
            </SvBox>
            <ShowAll>
              <input type="checkbox" />
              Show All
            </ShowAll>
          </ZoomRow>
          <ActionRow>
            <DelButton />
            <RefButton />
            <Button $width={33} $height={29} aria-label="Undo">
              <TagIcon tag="UNDO" />
            </Button>
          </ActionRow>
        </CategoriesColumn>
      </ViewerBody>
      <Status>pln9b 4.162mil  r19.685  oval28.02x59.51</Status>
      <ErfLine>{'ERF--> npth2c = 10 12 15'}</ErfLine>
      <BottomRow>
        <Button $grow $height={31}>
          Close
        </Button>
        <Button $width={29} $height={29} aria-label="Compare">
          <FacesIcon />
        </Button>
        <Button $width={29} $height={29} aria-label="Snapshot">
          <ShotIcon />
        </Button>
        <Button $width={29} $height={29} aria-label="No reference">
          <NoRefIcon />
        </Button>
        <Button $width={29} $height={29} aria-label="Numbers">
          <HalfIcon />
        </Button>
        <Button $width={29} $height={29} aria-label="Notes">
          <NoteIcon />
        </Button>
        <ChartButton $width={29} $height={29} aria-label="Histogram">
          <ChartIcon />
        </ChartButton>
      </BottomRow>
    </Panel>
  </ViewerFrame>
);

/* ---------- checklist editor ---------- */

const CheckMenus = styled.div`
  display: flex;
  height: 36px;
  border-bottom: 1px solid #000;

  nav {
    ${tealRaised}
    display: flex;
    align-items: center;
    gap: 18px;
    padding: 0 12px;
    outline: 1px solid #000;
    font-family: ${serif};
    font-size: 14px;
  }
`;

const CheckTitle = styled.div`
  height: 21px;
  line-height: 20px;
  text-align: center;
  font-family: ${serif};
  font-size: 14px;
  border-bottom: 1px solid #000;
`;

const CheckArea = styled.div`
  display: flex;
  gap: 6px;
  padding: 0 1px 1px 0;
  background: ${GREEN};
`;

const CheckItems = styled.div`
  flex: 1;
  min-width: 0;
  padding-right: 2px;
  border: 2px solid;
  border-color: #26705c #a9f0dc #a9f0dc #26705c;
`;

const CheckItem = styled.div`
  height: 119px;
  padding: 2px 2px 0;
  background: ${TEAL};
  border: 1px solid #000;
  border-bottom-width: 2px;
`;

const CheckHead = styled.div`
  display: flex;
  align-items: center;
  gap: 5px;
  height: 30px;
`;

const CheckLabel = styled.label`
  flex: 1;
  min-width: 0;
  display: flex;
  align-items: center;
  gap: 5px;
  font-family: ${serif};
  font-size: 14px;
  overflow: hidden;

  input {
    appearance: none;
    flex: none;
    width: 13px;
    height: 13px;
    margin: 0 13px 8px 1px;
    border: 1px solid #5c8084;
    background: ${TEAL};
  }

  input:checked {
    background:
      linear-gradient(120deg, transparent 42%, #c81450 42%, #c81450 62%, transparent 62%) right / 8px 11px no-repeat,
      linear-gradient(60deg, transparent 30%, #c81450 30%, #c81450 70%, transparent 70%) left / 4px 8px no-repeat,
      ${TEAL};
  }
`;

const ErfTag = styled.span`
  ${tealRaised}
  flex: none;
  width: 43px;
  height: 29px;
  line-height: 24px;
  font-size: 14px;
  font-weight: 400;
  text-align: center;
`;

const ErfInput = styled.input`
  ${tealSunken}
  flex: none;
  width: 104px;
  height: 29px;
  padding: 0 0 8px 4px;
  font-weight: 400;
`;

const CheckButtons = styled.div`
  display: grid;
  grid-template-columns: repeat(3, 1fr);
  gap: 4px;
  padding: 4px 0 3px;
`;

const CheckRun = styled.div`
  display: flex;
  align-items: center;
  gap: 5px;
  height: 34px;
  padding-left: 1px;
`;

const RunButton = styled.button`
  ${greenRaised}
  display: flex;
  align-items: center;
  justify-content: center;
  flex: none;
  width: 29px;
  height: 29px;
`;

const RunTime = styled.p`
  flex: none;
  margin: 0 auto 0 0;
  line-height: 15px;
  font-weight: 400;
  text-align: center;
`;

const Alert = styled.span`
  width: 17px;
  height: 33px;
  line-height: 31px;
  text-align: center;
  font-family: ${serif};
  font-size: 14px;
  background: #ff1919;
  border: 1px solid #000;
`;

const Report = styled.div`
  height: 20px;
  margin: 0 -2px;
  padding-left: 3px;
  line-height: 20px;
  font-weight: 400;
  background: ${CREAM};
  border-top: 1px solid #000;
  overflow: hidden;
`;

const CloseRow = styled.div`
  height: 30px;
  padding: 2px;
  border-top: 1px solid #000;
  background: ${TEAL};

  button {
    width: 100%;
    height: 25px;
  }
`;

const checks = [
  { name: 'Drill Checks', erf: 'Drill (Mil', note: '5 drill layers processed' },
  { name: 'Board-Drill', erf: 'Drill', note: '' },
  { name: 'Signal', erf: 'Signal', note: '' },
  { name: 'Power', erf: 'Plane', note: '' },
  { name: 'Mask', erf: 'Mask', note: '' },
];

const ChecklistEditor = () => (
  <ChecklistFrame>
    <FrameHead title="Checklist Editor" />
    <Panel $tone="teal">
      <CheckMenus>
        <nav>
          <Menu text="File" at={0} />
          <Menu text="Edit" at={0} />
          <Menu text="Run" at={0} />
        </nav>
      </CheckMenus>
      <CheckTitle>fp–qae</CheckTitle>
      <CheckArea>
        <CheckItems>
          {checks.map((c) => (
            <CheckItem key={c.name}>
              <CheckHead>
                <CheckLabel>
                  <input type="checkbox" defaultChecked />
                  <DrillIcon />
                  {c.name}
                </CheckLabel>
                <ErfTag>ERF:</ErfTag>
                <ErfInput type="text" aria-label="ERF" defaultValue={c.erf} />
                <Button $width={29} $height={29} aria-label="Help">
                  <HelpIcon />
                </Button>
              </CheckHead>
              <CheckButtons>
                <SerifButton $height={24}>Parameters...</SerifButton>
                <SerifButton $height={24}>Ranges...</SerifButton>
                <SerifButton $height={24}>Online...</SerifButton>
              </CheckButtons>
              <CheckRun>
                <RunButton aria-label="Run">
                  <RunIcon />
                </RunButton>
                <RunButton aria-label="Run on selected">
                  <RunIcon mark="slash" />
                </RunButton>
                <RunButton aria-label="Run inside profile">
                  <RunIcon mark="frame" />
                </RunButton>
                <RunTime>
                  30 Jul 2021
                  <br />
                  02:16 PM – 0:00:06
                </RunTime>
                <RunButton aria-label="View results">
                  <LensIcon />
                </RunButton>
                <Alert>!!</Alert>
              </CheckRun>
              <Report>{c.note}</Report>
            </CheckItem>
          ))}
        </CheckItems>
        <ScrollBar thumb={82} after={18} />
      </CheckArea>
      <CloseRow>
        <Button aria-label="Close checklist" />
      </CloseRow>
    </Panel>
  </ChecklistFrame>
);

/* ---------- results histogram ---------- */

const HistoTop = styled.div`
  display: flex;
  gap: 3px;
  height: 286px;
  margin: 3px 5px 0 4px;
`;

const HistoLeft = styled.div`
  display: flex;
  flex-direction: column;
  flex: none;
  width: 102px;
  background: ${TEAL};
  border: 1px solid #000;
  border-width: 2px 2px 1px 1px;
`;

const Measures = styled.div`
  display: grid;
  flex: none;
  grid-template-rows: repeat(5, 27px);
  height: 138px;
  padding-top: 1px;
  border-bottom: 1px solid #000;
`;

const Measure = styled.label`
  display: flex;
  align-items: center;
  gap: 8px;
  padding-left: 6px;

  input {
    appearance: none;
    width: 10px;
    height: 10px;
    transform: rotate(45deg);
    ${tealRaised}
  }

  input:checked {
    background: #c8004c;
    border-color: #4c7f83 #fff #fff #4c7f83;
  }
`;

const LeftButtons = styled.div`
  display: flex;
  flex: none;
  gap: 5px;
  height: 33px;
  padding: 2px 1px;
`;

const HistoRight = styled.div`
  display: flex;
  flex-direction: column;
  flex: 1;
  min-width: 0;
  background: ${TEAL};
  border: 2px solid #000;
  border-width: 2px 1px 3px 1px;
`;

const ChartTitle = styled.div`
  align-self: center;
  height: 22px;
  margin: 3px 0 0;
  padding: 0 3px;
  line-height: 24px;
  font-style: italic;
  background: #b0ffff;
  border: 1px solid #000;
  box-shadow: 3px 2px 0 #7c9c9c;
`;

const Bars = styled.div`
  flex: 1;
  display: flex;
  align-items: flex-end;
  padding: 0 8px 0 5px;
  border-bottom: 4px solid #000;
`;

const BarColumn = styled.div`
  flex: 1;
  margin-left: -1px;
  text-align: center;
  line-height: 17px;
  color: ${(p) => (p.$low ? '#e01414' : '#000')};
`;

const Bar = styled.div`
  background: #ff1919;
  border: 1px solid #000;
  border-bottom: 0;
`;

const Ranges = styled.div`
  display: flex;
  flex: none;
  height: 29px;
  margin: 1px 8px 8px 5px;
`;

const Range = styled.div`
  flex: 1;
  margin-left: -1px;
  padding-left: 6px;
  line-height: 15px;
  white-space: pre;
  color: #300;
  background: #ff1919;
  border: 1px solid #000;
`;

const HistoLower = styled.div`
  display: flex;
  flex: none;
  height: 62px;
  border-top: 1px solid #000;
`;

const FieldList = styled.div`
  display: flex;
  flex: none;
  width: 111px;
  gap: 3px;
`;

const Resolution = styled.label`
  flex: 1;
  display: flex;
  flex-direction: column;
  padding: 1px 3px 2px;
  border: solid #000;
  border-width: 0 1px 0 1px;

  span {
    text-align: center;
    height: 22px;
    line-height: 20px;
  }

  output {
    height: 19px;
    padding-left: 3px;
  }

  input {
    appearance: none;
    ${tealSunken}
    background: #83b7b7;
    height: 15px;
  }

  input::-webkit-slider-thumb {
    appearance: none;
    width: 30px;
    height: 11px;
    ${tealRaised}
    border-width: 1px;
    background: linear-gradient(90deg, ${TEAL} 13px, #4c7f83 13px, #4c7f83 14px, #d3f5f5 14px, #d3f5f5 15px, ${TEAL} 15px);
  }
`;

const Sash = styled.div`
  display: flex;
  align-items: center;
  height: 10px;
  padding-right: 9px;

  &::before {
    content: '';
    flex: 1;
    height: 2px;
    background: #a9f0dc;
    border-top: 1px solid #26705c;
  }

  &::after {
    content: '';
    width: 10px;
    height: 10px;
    ${greenRaised}
  }
`;

const MapPanel = styled.div`
  display: flex;
  justify-content: center;
  height: 164px;
  margin: 0 4px;
  padding-top: 18px;
  border: 2px solid;
  border-color: #26705c #a9f0dc #a9f0dc #26705c;
  box-shadow: inset 0 0 0 1px #000;
`;

const HistoBottom = styled.div`
  display: flex;
  align-items: center;
  gap: 4px;
  height: 45px;
  padding: 0 5px 2px;
`;

const Count = styled.div`
  flex: 1;
  height: 42px;
  line-height: 41px;
  padding-left: 3px;
  background: ${TEAL};
  border: 1px solid #000;
`;

const histogram = [
  { value: '4.162', size: 49, range: '4.1-\n 4.2', low: true },
  { value: '5.162', size: 61, range: '5.1-\n 5.2', low: true },
  { value: '6.483', size: 77, range: '6.4-\n 6.5' },
  { value: '6.515', size: 78, range: '6.5-\n 6.6' },
  { value: '6.61', size: 79, range: '6.6-\n 6.7' },
  { value: '6.711', size: 80, range: '6.7-\n 6.8' },
  { value: '7.155', size: 85, range: '7.1-\n 7.2' },
];

const ResultsHistogram = () => (
  <HistogramFrame>
    <FrameHead title="Results histogram" />
    <Panel>
      <HistoTop>
        <HistoLeft>
          <Measures>
            {['Count', 'Average', 'Sum', 'Min', 'Max'].map((m) => (
              <Measure key={m}>
                <input type="radio" name="measure" defaultChecked={m === 'Min'} />
                {m}
              </Measure>
            ))}
          </Measures>
          <Scrolled>
            <List $tone="teal">
              <ListItem $on $tone="teal">
                Spacing
              </ListItem>
            </List>
            <ScrollBar tone="teal" />
          </Scrolled>
          <LeftButtons>
            <DelButton />
            <RefButton />
          </LeftButtons>
        </HistoLeft>
        <HistoRight>
          <ChartTitle>Size(Spacing) / Min(Spacing)</ChartTitle>
          <Bars>
            {histogram.map((h) => (
              <BarColumn key={h.value} $low={h.low}>
                {h.value}
                <Bar style={{ height: h.size }} />
              </BarColumn>
            ))}
          </Bars>
          <Ranges>
            {histogram.map((h) => (
              <Range key={h.value}>{h.range}</Range>
            ))}
          </Ranges>
          <ScrollBar across tone="teal" thumb={80} after={20} />
          <HistoLower>
            <FieldList>
              <List $tone="teal">
                <ListItem $on $tone="teal">
                  Spacing
                </ListItem>
                <ListItem>NPTH</ListItem>
                <ListItem>Clearance</ListItem>
              </List>
              <ScrollBar tone="teal" />
            </FieldList>
            <Resolution>
              <span>Resolution</span>
              <output>0.1</output>
              <input type="range" min="0" max="10" step="0.1" defaultValue="0.1" />
            </Resolution>
          </HistoLower>
        </HistoRight>
      </HistoTop>
      <Sash />
      <MapPanel>
        <svg width="50" height="123" viewBox="0 0 50 123">
          <path d="M1 1h15v2h28V1h5v119h-2v2H3v-2H1z" fill={TEAL} stroke="#000" strokeWidth="2" />
          <path d="M21 22h6v3h-6zM21 28h4v3h-4z" fill="#c81ac8" />
          <path d="M22 25h3v1h-3z" />
        </svg>
      </MapPanel>
      <HistoBottom>
        <DelButton height={38} />
        <RefButton height={38} />
        <Count>564 measurements for 6 layers</Count>
        <Button $width={37} $height={38} aria-label="Zoom to histogram">
          <ToFromIcon />
        </Button>
        <Button $width={37} $height={38} aria-label="Zoom from histogram">
          <ToFromIcon back />
        </Button>
      </HistoBottom>
      <CloseRow>
        <Button>Close</Button>
      </CloseRow>
    </Panel>
  </HistogramFrame>
);

/* ---------- taskbar ---------- */

const Taskbar = styled.footer`
  display: flex;
  align-items: center;
  flex: none;
  height: 40px;
  gap: 4px;
  padding: 0 1px 0 8px;
  background:
    radial-gradient(ellipse 90px 40px at 1200px 20px, #6e6a58, transparent),
    radial-gradient(ellipse 220px 60px at 600px 20px, #c49c84, transparent),
    linear-gradient(90deg, #3e3c2e, #5e5a48 12%, #6c6858 24%, #7c7060 38%, #544c3c 45%, #807460 52%, #464032 64%, #5c584a 80%, #3c3a2e);
  border-top: 1px solid #201e18;
  box-shadow: inset 0 1px 0 #8c887c;
`;

const Start = styled.button`
  width: 38px;
  height: 38px;
  margin-right: 10px;
`;

const Task = styled.button`
  display: flex;
  align-items: center;
  justify-content: center;
  width: ${(p) => (p.$stack ? 50 : 58)}px;
  height: 38px;
  margin-right: ${(p) => (p.$stack ? 8 : 0)}px;
  border: 1px solid rgba(225, 225, 215, 0.55);
  border-radius: 3px;
  background: ${(p) =>
    p.$on
      ? 'linear-gradient(135deg, #f4e8e4, #e4c4b8)'
      : 'linear-gradient(135deg, rgba(255, 255, 255, 0.4), rgba(190, 190, 175, 0.25) 60%)'};
  ${(p) => p.$stack && 'box-shadow: 3px 0 0 -1px #77735f, 4px 0 0 -1px #c9c5b5, 7px 0 0 -1px #6c6856, 8px 0 0 -1px #b5b1a1;'}
`;

const Tray = styled.div`
  display: flex;
  align-items: center;
  gap: 10px;
  margin-left: auto;
`;

const TrayClock = styled.time`
  width: 80px;
  padding-top: 1px;
  text-align: center;
  font: 400 12px/18px ${sans};
  color: #fff;
`;

const ShowDesktop = styled.button`
  width: 14px;
  height: 38px;
  border: 1px solid #b5b1a1;
  background: linear-gradient(#8c8878, #3c3a30);
`;

const Shell = () => (
  <svg width="32" height="30" viewBox="0 0 32 30">
    <path d="M16 27C8 25 1 20 1 12c1-5 5-6 6-6 1-3 4-4 6-3 2-3 6-2 7 0 3-1 6 1 7 4 4 2 4 6 3 10-2 5-8 9-14 10z" fill="#fbdc8c" stroke="#d08a2c" />
    <path d="M16 26L6 8M16 26L11 4M16 26V2M16 26l5-22M16 26L27 8M15 26L2 14" stroke="#e0a040" />
    <path d="M21 13l2 5 6 0-4 4 3 6-6-2-5 3 0-6-4-4 6-1z" fill="#f08a2c" stroke="#a84c0c" />
  </svg>
);

const Notes = () => (
  <svg width="26" height="28" viewBox="0 0 26 28">
    <rect x=".5" y=".5" width="25" height="27" rx="3" fill="#f7fbff" stroke="#a8c4d8" />
    <path d="M4 5h18M4 9h18M4 13h18M4 17h18M4 21h18" stroke="#2c8cc8" strokeWidth="2" />
  </svg>
);

const Floppy = () => (
  <svg width="32" height="32" viewBox="0 0 32 32">
    <path d="M1 1h27l3 3v27H1z" fill="#1c2cc8" stroke="#0a1070" />
    <path d="M10 1h12v10H10z" fill="#d8d8e0" />
    <path d="M17 2h4v8h-4z" fill="#1c2cc8" />
    <rect x="5" y="14" width="22" height="16" fill="#fff" />
    <path d="M5 18h22M5 22h22M5 26h11" stroke="#c82c2c" />
    <text x="17" y="29" fontFamily="Liberation Sans, sans-serif" fontSize="8" fontWeight="700" fill="#444">
      64
    </text>
  </svg>
);

const GreenP = () => (
  <svg width="32" height="32" viewBox="0 0 32 32">
    <path d="M9 8h12c10 0 8 14-2 14h-6l-2 8H5l5-18z" fill="#10a050" />
    <path d="M15 13h5c3 0 2 4-1 4h-5z" fill="#8c8878" />
    <path d="M21 2H7L2 24M5 8H3" stroke="#10a050" strokeWidth="1.400" fill="none" />
  </svg>
);

const RedG = () => (
  <svg width="32" height="32" viewBox="0 0 32 32">
    <path d="M28 2l-3 7h-9l-7 6-1 8h9l2-4h-5l2-4h11l-3 9-5 5H6l-4-4 2-12 9-8 9-1z" fill="#e02c1c" stroke="#8c0c08" />
  </svg>
);

const Sheet = () => (
  <svg width="32" height="32" viewBox="0 0 32 32">
    <path d="M8 3h18v18H3V8z" fill="#f0f7e8" stroke="#5ca83c" />
    <rect x="10" y="11" width="20" height="18" fill="#f7fff0" stroke="#7cb85c" />
    <path d="M12 19h16M12 24h16M18 13v14M23 13v14" stroke="#7cb85c" strokeWidth="2" />
    <path d="M7 8l10 12M17 8L7 20" stroke="#1c6c2c" strokeWidth="3" />
  </svg>
);

const Disc = () => (
  <svg width="34" height="30" viewBox="0 0 34 30">
    <path d="M2 6c2-5 8-5 12 0l-3 2z" fill="#1cb4ac" stroke="#0c6c74" />
    <ellipse cx="18" cy="19" rx="15" ry="9" fill="#1c3c6c" />
    <ellipse cx="20" cy="16" rx="12" ry="9" fill="#20b4a8" stroke="#0c5c6c" />
    <ellipse cx="20" cy="16" rx="8" ry="5" fill="none" stroke="#e8d84c" strokeWidth="1.500" />
    <ellipse cx="20" cy="14" rx="4" ry="3" fill="#2c3c8c" />
    <ellipse cx="20" cy="13" rx="2" ry="1" fill="#5ce4dc" />
    <path d="M3 17l5 6" stroke="#e8e4f8" strokeWidth="2" />
  </svg>
);

const BigX = () => (
  <svg width="32" height="30" viewBox="0 0 32 30">
    <path d="M1 2h8l22 26h-8z" fill="#8c108c" stroke="#1c001c" />
    <path d="M30 2L17 15M14 17L2 28" stroke="#222" strokeWidth="1.500" />
  </svg>
);

const Bird = () => (
  <svg width="34" height="34" viewBox="0 0 34 34">
    <circle cx="17" cy="17" r="16" fill="#2c94ec" />
    <path d="M8 7l16 7c2 1 1 4-1 6h3l-9 9 2-6h-4l2-3c-4 0-6-3-6-5l4 1c-4-2-6-5-7-9z" fill="#fff" />
  </svg>
);

const WordIcon = () => (
  <svg width="32" height="32" viewBox="0 0 32 32">
    <path d="M2 23V10c0-5 4-8 9-8h16v21z" fill="#dfe9f8" stroke="#4c6cb0" />
    <path d="M2 23V10c0-5 4-8 9-8L9 23z" fill="#4c74c0" />
    <path d="M10 5l20 2-2 24-17-2z" fill="#fff" stroke="#8ca4d0" />
    <path d="M23 9h5M23 12h5M23 15h5M14 20h13M14 23h13M14 26h12" stroke="#1c3c8c" strokeWidth="1.500" />
    <path d="M11 8l3 9 3-8 2 8 3-9" stroke="#1c3c8c" strokeWidth="2" fill="none" />
  </svg>
);

const TrayIcons = () => (
  <>
    <svg width="14" height="13" viewBox="0 0 14 13">
      <path d="M2 4c3-3 6 1 10-3" stroke="#ccc" fill="none" />
      <rect x=".5" y="5.500" width="13" height="7" fill="#bbb" stroke="#ddd" />
      <path d="M2 7.500h10M2 10.500h10" stroke="#444" strokeDasharray="1 1" />
    </svg>
    <svg width="16" height="16" viewBox="0 0 16 16">
      <circle cx="8" cy="8" r="7.500" fill="#1c2cac" stroke="#c8d4f0" />
      <path d="M5.500 6a2.500 2.300 0 1 1 3.500 2c-1 .6-1 1-1 2M8 11.500v2" stroke="#fff" strokeWidth="1.800" fill="none" />
    </svg>
    <svg width="9" height="18" viewBox="0 0 9 18">
      <path d="M3 1h5v3H3zM1 3h5v3H1z" fill="#5c584a" stroke="#fff" />
      <path d="M1.500 13h6l-3 3z" fill="#fff" />
    </svg>
    <svg width="8" height="5" viewBox="0 0 8 5">
      <path d="M0 5l4-5 4 5z" fill="#fff" />
    </svg>
    <svg width="16" height="16" viewBox="0 0 16 16">
      <path d="M2 1v4M5 1v4M1 3h5v3H1zM3.500 6v5H6" stroke="#fff" fill="none" />
      <path d="M6.500 4.500h9v8h-9zM8 15h6" stroke="#fff" fill="#33352c" />
    </svg>
    <svg width="16" height="16" viewBox="0 0 16 16">
      <path d="M1 5h3l4-4v14l-4-4H1z" fill="#eee" />
      <path d="M10 6q1 2 0 4M12 4q2 4 0 8M14 2q3 6 0 12" stroke="#ddd" fill="none" />
    </svg>
    <svg width="16" height="16" viewBox="0 0 16 16">
      <path d="M1.500 1v14M2 2h6l2 1h4v6H2z" fill="#fff" stroke="#fff" />
      <circle cx="11" cy="10.500" r="4.500" fill="#e02c1c" />
      <path d="M9 8.500l4 4M13 8.500l-4 4" stroke="#fff" strokeWidth="1.500" />
    </svg>
  </>
);

const tasks = [
  { name: 'Shell', icon: Shell },
  { name: 'Notepad', icon: Notes },
  { name: 'Disk', icon: Floppy },
  { name: 'Capture', icon: GreenP },
  { name: 'Genesis', icon: RedG },
  { name: 'Spreadsheet', icon: Sheet, stack: true },
  { name: 'Session 1', icon: Disc },
  { name: 'X server', icon: BigX, stack: true, on: true },
  { name: 'Session 2', icon: Disc },
  { name: 'Messenger', icon: Bird },
  { name: 'Document', icon: WordIcon },
];

const DesktopBar = () => (
  <Taskbar>
    <Start aria-label="Start">
      <svg width="38" height="38" viewBox="0 0 38 38">
        <defs>
          <radialGradient id="orb" cx=".5" cy=".85" r=".8">
            <stop offset="0" stopColor="#5ce0ff" />
            <stop offset=".5" stopColor="#1c74b8" />
            <stop offset="1" stopColor="#0c2c5c" />
          </radialGradient>
        </defs>
        <circle cx="19" cy="19" r="18" fill="url(#orb)" stroke="#16344c" />
        <ellipse cx="19" cy="10" rx="13" ry="8" fill="#fff" opacity=".3" />
        <path d="M10 11c3-2 6-1 8 0l-2 8c-3-1-5-1-8 0z" fill="#f0642c" />
        <path d="M20 12c3 1 5 1 9-1l-2 8c-3 2-6 1-9 0z" fill="#8cc83c" />
        <path d="M8 21c3-1 5-1 8 0l-2 8c-3-2-5-2-8 0z" fill="#3ca4ec" />
        <path d="M18 21c3 1 6 2 9 0l-2 8c-3 2-6 1-9 0z" fill="#fcd43c" />
      </svg>
    </Start>
    {tasks.map(({ name, icon: Icon, stack, on }) => (
      <Task key={name} $stack={stack} $on={on} aria-label={name}>
        <Icon />
      </Task>
    ))}
    <Tray>
      <TrayIcons />
      <TrayClock>
        14:24
        <br />
        2021/7/30
      </TrayClock>
      <ShowDesktop aria-label="Show desktop" />
    </Tray>
  </Taskbar>
);

const Pointer = styled.svg`
  position: absolute;
  left: 1125px;
  top: 210px;
  pointer-events: none;
`;

const App = () => (
  <>
    <GlobalStyle />
    <Screen>
      <MainWindow />
      <DesktopBar />
      <ChecklistEditor />
      <ResultsHistogram />
      <ResultsViewer />
      <Pointer width="380" height="194" viewBox="0 0 380 194">
        <path d="M4 5L356 179" stroke="#0f0" strokeWidth="5" strokeLinecap="round" />
        <path d="M377 191L359 172 349 187z" fill="#0f0" stroke="#0f0" />
      </Pointer>
    </Screen>
  </>
);

export default App;
